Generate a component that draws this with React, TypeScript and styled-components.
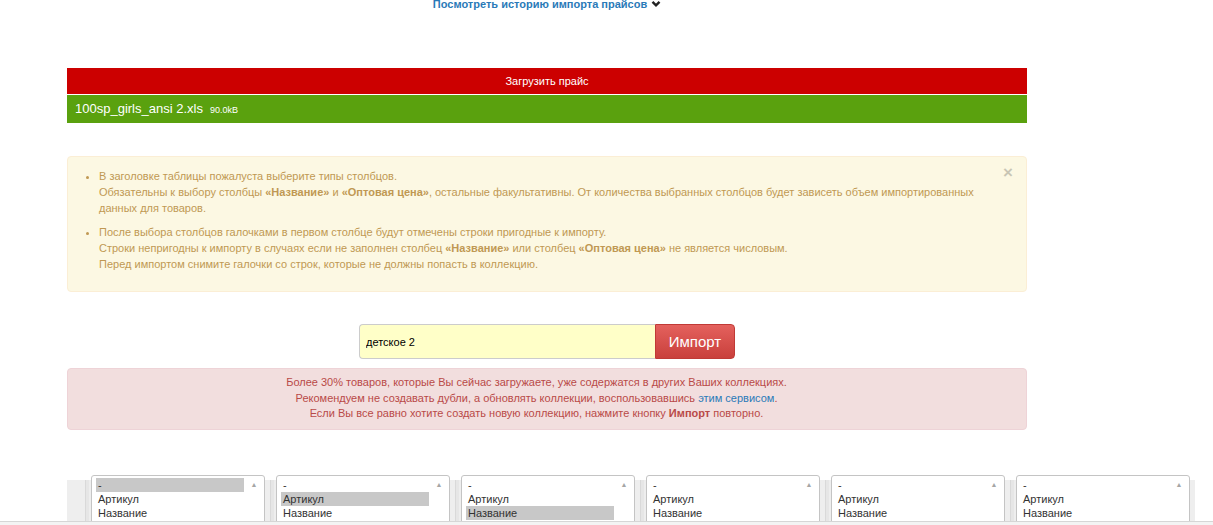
import React from 'react'
import styled, {createGlobalStyle} from 'styled-components'

const GlobalStyle = createGlobalStyle`
  html, body {
    margin: 0;
    padding: 0;
    background: #fff;
    overflow: hidden;
  }
  body {
    font-family: "Liberation Sans", Arial, sans-serif;
    font-size: 11px;
    color: #333;
  }
`

const Page = styled.div`
  margin-left: 67px;
`

const Block = styled.div`
  width: 960px;
`

const HistoryLink = styled.a`
  display: flex;
  justify-content: center;
  align-items: center;
  gap: 4px;
  margin-top: -3px;
  height: 14px;
  line-height: 14px;
  font-weight: bold;
  color: #2a7ab8;
  text-decoration: none;
  cursor: pointer;
`

const UploadBar = styled.div`
  margin-top: 57px;
  height: 26px;
  line-height: 26px;
  background: #cc0000;
  color: #fff;
  text-align: center;
`

const FileBar = styled.div`
  margin-top: 1px;
  height: 28px;
  line-height: 28px;
  padding-left: 8px;
  background: #5aa10e;
  color: #fff;
  display: flex;
  align-items: baseline;
  gap: 7px;
`

const FileName = styled.span`
  font-size: 13px;
`

const FileSize = styled.span`
  font-size: 9px;
`

const Alert = styled.div<{$tone: 'warning' | 'danger'}>`
  position: relative;
  border-radius: 4px;
  border: 1px solid ${p => (p.$tone === 'warning' ? '#fbeed5' : '#eed3d7')};
  background: ${p => (p.$tone === 'warning' ? '#fcf8e3' : '#f2dede')};
  color: ${p => (p.$tone === 'warning' ? '#c09853' : '#b94a48')};
`

const WarningAlert = styled(Alert)`
  margin-top: 33px;
  padding: 11px 35px 19px 14px;
  line-height: 16px;
`

const DangerAlert = styled(Alert)`
  margin-top: 9px;
  padding: 6px 35px 7.5px 14px;
  line-height: 15.5px;
  text-align: center;
`

const Close = styled.span`
  position: absolute;
  right: 13px;
  top: 6px;
  font-size: 17px;
  font-weight: bold;
  color: #000;
  opacity: 0.2;
  line-height: 20px;
  cursor: pointer;
`

const Tips = styled.ul`
  margin: 0;
  padding-left: 17px;
  list-style: disc;
`

const Tip = styled.li`
  white-space: nowrap;
  & + & {
    margin-top: 8px;
  }
`

const Link = styled.a`
  color: #2a7ab8;
  text-decoration: none;
`

const ImportRow = styled.div`
  margin-top: 32px;
  display: flex;
  justify-content: center;
`

const NameInput = styled.input`
  box-sizing: border-box;
  width: 296px;
  height: 35px;
  margin: 0;
  padding: 0 6px;
  border: 1px solid #cccccc;
  border-right: none;
  border-radius: 4px 0 0 4px;
  background: #ffffc8;
  font-family: "Liberation Sans", Arial, sans-serif;
  font-size: 11px;
  color: #000;
  outline: none;
`

const ImportButton = styled.button`
  box-sizing: border-box;
  width: 80px;
  height: 35px;
  margin: 0;
  border: 1px solid #c03a36;
  border-radius: 0 4px 4px 0;
  background: linear-gradient(to bottom, #e4615d 0%, #c9403c 100%);
  color: #fff;
  font-family: "Liberation Sans", Arial, sans-serif;
  font-size: 15px;
  cursor: pointer;
`

const HeadRow = styled.div`
  margin-top: 50px;
  display: flex;
`

const CheckCell = styled.div`
  width: 18px;
  height: 60px;
  background: #eeeeee;
`

const HeadCell = styled.div`
  box-sizing: border-box;
  width: 185px;
  height: 60px;
  padding: 0 5px;
  border-left: 1px solid #d9d9d9;
  background: #eeeeee;
  box-shadow: inset 3px 0 0 #e6e6e6;
`

const ListBox = styled.div`
  box-sizing: border-box;
  margin-top: -5px;
  width: 174px;
  height: 70px;
  border: 1px solid #c4c4c4;
  border-radius: 3px;
  background: #fff;
  display: flex;
`

const Options = styled.div`
  margin: 2px 0 0 4px;
  width: 148px;
`

const Option = styled.div<{$selected?: boolean}>`
  height: 14px;
  line-height: 14px;
  padding-left: 2px;
  color: #333;
  background: ${p => (p.$selected ? '#c8c8c8' : 'transparent')};
`

const ScrollTrack = styled.div`
  flex: 1;
  text-align: center;
  color: #a6a6a6;
  font-size: 7px;
  line-height: 14px;
  padding-top: 2px;
`

const WindowScrollbar = styled.div`
  position: fixed;
  left: 0;
  right: 0;
  bottom: 0;
  height: 3px;
  border-top: 1px solid #d6d6d6;
  background: #f3f3f3;
`

const Chevron = () => (
  <svg width="10" height="8" viewBox="0 0 10 8">
    <path d="M1.5 1.8 L5 5.4 L8.5 1.8" fill="none" stroke="#222" strokeWidth="2.4" />
  </svg>
)

const columnTypes = ['-', 'Артикул', 'Название']
const selectedByColumn = [0, 1, 2, -1, -1, -1]

export default function App() {
  return (
    <>
      <GlobalStyle />
      <Page>
        <Block>
          <HistoryLink>
            Посмотреть историю импорта прайсов <Chevron />
          </HistoryLink>
          <UploadBar>Загрузить прайс</UploadBar>
          <FileBar>
            <FileName>100sp_girls_ansi 2.xls</FileName>
            <FileSize>90.0kB</FileSize>
          </FileBar>

          <WarningAlert $tone="warning">
            <Close>×</Close>
            <Tips>
              <Tip>
                В заголовке таблицы пожалуста выберите типы столбцов.
                <br />
                Обязательны к выбору столбцы <b>«Название»</b> и <b>«Оптовая цена»</b>, остальные факультативны. От
                количества выбранных столбцов будет зависеть объем импортированных
                <br />
                данных для товаров.
              </Tip>
              <Tip>
                После выбора столбцов галочками в первом столбце будут отмечены строки пригодные к импорту.
                <br />
                Строки непригодны к импорту в случаях если не заполнен столбец <b>«Название»</b> или столбец{' '}
                <b>«Оптовая цена»</b> не является числовым.
                <br />
                Перед импортом снимите галочки со строк, которые не должны попасть в коллекцию.
              </Tip>
            </Tips>
          </WarningAlert>

          <ImportRow>
            <NameInput defaultValue="детское 2" />
            <ImportButton>Импорт</ImportButton>
          </ImportRow>

          <DangerAlert $tone="danger">
            Более 30% товаров, которые Вы сейчас загружаете, уже содержатся в других Ваших коллекциях.
            <br />
            Рекомендуем не создавать дубли, а обновлять коллекции, воспользовавшись <Link>этим сервисом</Link>.
            <br />
            Если Вы все равно хотите создать новую коллекцию, нажмите кнопку <b>Импорт</b> повторно.
          </DangerAlert>
        </Block>

        <HeadRow>
          <CheckCell />
          {selectedByColumn.map((sel, i) => (
            <HeadCell key={i}>
              <ListBox>
                <Options>
                  {columnTypes.map((t, j) => (
                    <Option key={t} $selected={j === sel}>
                      {t}
                    </Option>
                  ))}
                </Options>
                <ScrollTrack>▲</ScrollTrack>
              </ListBox>
            </HeadCell>
          ))}
        </HeadRow>
      </Page>
      <WindowScrollbar />
    </>
  )
}
